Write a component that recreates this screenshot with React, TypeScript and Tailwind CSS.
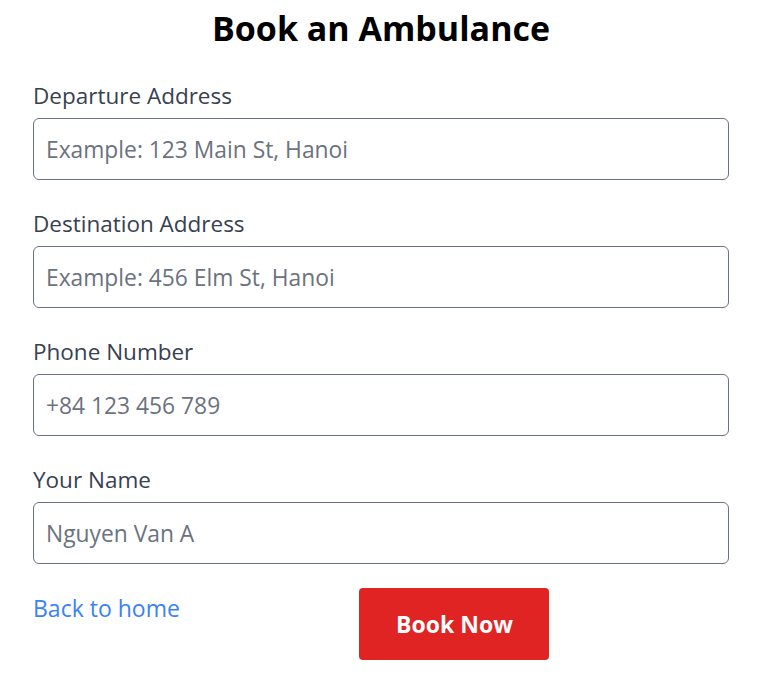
import React from "react";

const fields = [
  { label: "Departure Address", placeholder: "Example: 123 Main St, Hanoi" },
  { label: "Destination Address", placeholder: "Example: 456 Elm St, Hanoi" },
  { label: "Phone Number", placeholder: "+84 123 456 789" },
  { label: "Your Name", placeholder: "Nguyen Van A" },
];

export default function App() {
  return (
    <div className="min-h-screen bg-white font-['Open_Sans',sans-serif]">
      <div className="ml-[33px] w-[696px] pt-[8px]">
        <h1 className="text-center text-[34px] leading-[40px] font-bold text-black">
          Book an Ambulance
        </h1>
        <form className="mt-[34px]">
          {fields.map((field) => (
            <div key={field.label} className="mb-[30px]">
              <label className="block mb-[8px] text-[22.5px] leading-[28px] text-[#374151]">
                {field.label}
              </label>
              <input
                type="text"
                placeholder={field.placeholder}
                className="block w-full h-[62px] px-[12px] rounded-md border border-[#6b7280] text-[22.8px] text-[#374151] placeholder:text-[#6b7280] outline-none"
              />
            </div>
          ))}
          <div className="flex items-start -mt-[6px]">
            <a href="#" className="mt-[6px] text-[23px] leading-[28px] text-[#3b82f6]">
              Back to home
            </a>
            <div className="flex-1 flex justify-center">
              <button
                type="button"
                className="w-[190px] h-[72px] rounded-[4px] bg-[#e02424] text-[23px] font-bold text-white"
              >
                Book Now
              </button>
            </div>
          </div>
        </form>
      </div>
    </div>
  );
}
